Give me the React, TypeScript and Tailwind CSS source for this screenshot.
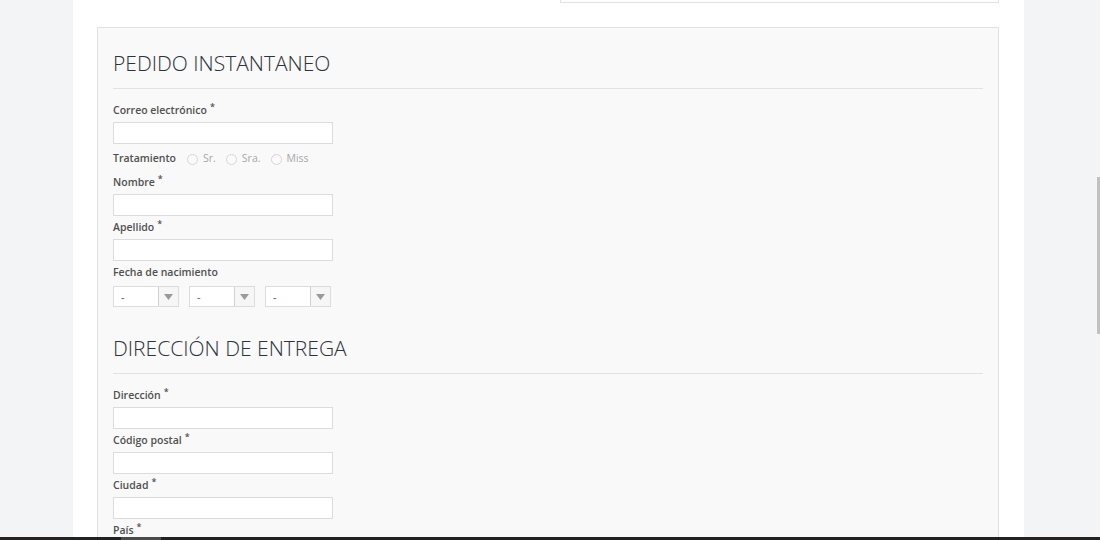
import { ReactNode } from "react";

const font = { fontFamily: '"Open Sans", "Liberation Sans", sans-serif' };

function SectionTitle({ children }: { children: ReactNode }) {
  return (
    <div className="border-b border-[#e2e2e2] pt-[20px] pb-[10px]">
      <h2 className="text-[21px] leading-[30px] font-light text-[#2e323a]">
        {children}
      </h2>
    </div>
  );
}

function Label({ text, required }: { text: string; required?: boolean }) {
  return (
    <div className="text-[10.5px] leading-[17px] font-semibold text-[#505050]">
      {text}
      {required && <sup className="ml-[3px] text-[9px]">*</sup>}
    </div>
  );
}

function Field({ label, required }: { label: string; required?: boolean }) {
  return (
    <div className="mt-[3px]">
      <Label text={label} required={required} />
      <div className="mt-[3px] h-[22px] w-[220px] border border-[#dcdcdc] bg-white" />
    </div>
  );
}

function Radio({ label }: { label: string }) {
  return (
    <div className="flex items-center gap-[5px]">
      <span className="h-[11px] w-[11px] rounded-full border border-[#d6d6d6] bg-[#fafafa]" />
      <span className="text-[10.5px] text-[#a8a8a8]">{label}</span>
    </div>
  );
}

function Select() {
  return (
    <div className="flex h-[21px] w-[66px] border border-[#dcdcdc] bg-white">
      <div className="flex-1 pl-[7px] text-[11px] leading-[19px] text-[#555]">-</div>
      <div className="flex w-[20px] items-center justify-center border-l border-[#d0d0d0] bg-[#f6f6f6]">
        <svg width="9" height="6" viewBox="0 0 9 6">
          <path d="M0 0 L9 0 L4.5 6 Z" fill="#9a9a9a" />
        </svg>
      </div>
    </div>
  );
}

export default function App() {
  return (
    <div className="flex h-[540px] w-[1100px] flex-col overflow-hidden" style={font}>
      <div className="flex flex-1 overflow-hidden">
        <div className="w-[73px] bg-[#f3f4f6]" />
        <div className="w-[951px] bg-white">
          <div className="ml-[487px] h-[3px] w-[439px] border-x border-b border-[#e2e2e2]" />
          <div className="mt-[24px] ml-[24px] w-[902px] border border-[#e2e2e2] bg-[#f9f9f9] px-[15px] pb-[40px]">
            <SectionTitle>PEDIDO INSTANTANEO</SectionTitle>
            <div className="mt-[13px]">
              <Field label="Correo electrónico" required />
              <div className="mt-[3px] flex h-[24px] items-center gap-[10px]">
                <span className="mr-[1px] text-[10.5px] font-semibold text-[#505050]">
                  Tratamiento
                </span>
                <Radio label="Sr." />
                <Radio label="Sra." />
                <Radio label="Miss" />
              </div>
              <Field label="Nombre" required />
              <Field label="Apellido" required />
              <div className="mt-[3px]">
                <Label text="Fecha de nacimiento" />
                <div className="mt-[5px] flex gap-[10px]">
                  <Select />
                  <Select />
                  <Select />
                </div>
              </div>
            </div>
            <div className="mt-[6px]">
              <SectionTitle>DIRECCIÓN DE ENTREGA</SectionTitle>
            </div>
            <div className="mt-[13px]">
              <Field label="Dirección" required />
              <Field label="Código postal" required />
              <Field label="Ciudad" required />
              <div className="mt-[3px]">
                <Label text="País" required />
              </div>
            </div>
          </div>
        </div>
        <div className="flex-1 bg-[#f3f4f6]" />
        <div className="w-[4px] bg-[#f5f5f5] pt-[177px]">
          <div className="ml-[1px] h-[157px] w-[3px] bg-[#c1c1c1]" />
        </div>
      </div>
      <div className="flex h-[3px] bg-[#222]">
        <div className="ml-[121px] w-[40px] bg-[#4a4a4a]" />
      </div>
    </div>
  );
}
